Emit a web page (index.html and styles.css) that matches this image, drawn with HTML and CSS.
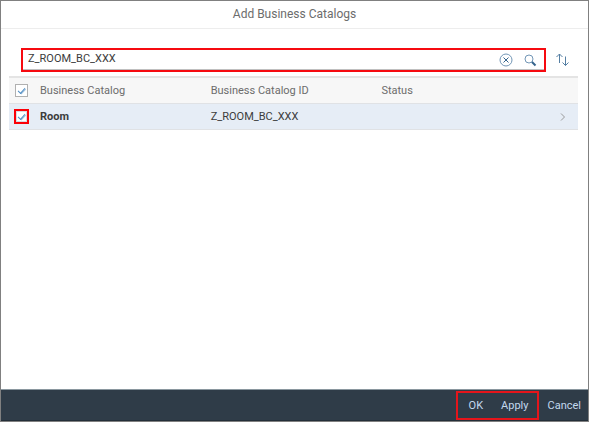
FILE: index.html
```html
<!DOCTYPE html>
<html lang="en">
<head>
<meta charset="utf-8">
<title>Add Business Catalogs</title>
<link rel="stylesheet" href="styles.css">
</head>
<body>
<main class="dialog">
  <header class="dialog-header"><h1 class="title">Add Business Catalogs</h1></header>
  <div class="content">
    <div class="toolbar">
      <form class="search marked" role="search">
        <input class="search-input" type="text" value="Z_ROOM_BC_XXX" aria-label="Search">
        <button class="icon-button" type="reset" aria-label="Clear">
          <svg width="14" height="14" viewBox="0 0 14 14"><circle cx="7" cy="7" r="6"/><path class="strong" d="M4.500 4.500l5 5M9.500 4.500l-5 5"/></svg>
        </button>
        <button class="icon-button" type="submit" aria-label="Search">
          <svg width="14" height="14" viewBox="0 0 14 14"><circle cx="6" cy="6" r="4"/><path class="handle" d="M9 9l3.500 3.500"/></svg>
        </button>
      </form>
      <button class="icon-button" type="button" aria-label="Sort">
        <svg class="sort" width="14" height="14" viewBox="0 0 14 14"><path d="M3.500 10V1M0.500 4l3-3 3 3M9.500 3.500v9M6.500 9.500l3 3 3-3"/></svg>
      </button>
    </div>
    <table class="catalogs">
      <colgroup><col class="col-select"><col class="col-text"><col class="col-text"><col><col class="col-nav"></colgroup>
      <thead>
        <tr>
          <th><label class="check"><input type="checkbox" checked aria-label="Select all"></label></th>
          <th scope="col">Business Catalog</th>
          <th scope="col">Business Catalog ID</th>
          <th scope="col">Status</th>
          <th></th>
        </tr>
      </thead>
      <tbody>
        <tr>
          <td><label class="check check-marked"><input type="checkbox" checked aria-label="Select Room"></label></td>
          <td class="name">Room</td>
          <td>Z_ROOM_BC_XXX</td>
          <td></td>
          <td><svg class="chevron" width="6" height="8" viewBox="0 0 6 8"><path d="M1 0.500L4.500 4L1 7.500"/></svg></td>
        </tr>
      </tbody>
    </table>
  </div>
  <footer class="footer">
    <div class="actions marked">
      <button class="action" type="button">OK</button>
      <button class="action" type="button">Apply</button>
    </div>
    <button class="action" type="button">Cancel</button>
  </footer>
</main>
</body>
</html>
```
FILE: styles.css
```css
* { box-sizing: border-box; }

body {
  margin: 0;
  font-family: Roboto, "Liberation Sans", sans-serif;
  font-size: 11px;
  color: #3c3c3c;
}

button, input { font: inherit; color: inherit; }
button { padding: 0; border: 0; background: none; }

.dialog {
  display: flex;
  flex-direction: column;
  min-height: 100vh;
  border: 1px solid #808080;
  background: #fff;
}

.dialog-header {
  padding: 5px 0 6px;
  border-bottom: 1px solid #ededed;
}

.title {
  margin: 0;
  font-size: 12px;
  line-height: 16px;
  font-weight: 400;
  text-align: center;
  color: #6c6c6c;
}

.content { flex: 1; padding: 19px 10px 0 8px; }

.toolbar {
  display: flex;
  align-items: center;
  gap: 10px;
  padding: 0 8px 4px 12px;
}

.marked { border: 2px solid #f60a10; }

.search {
  display: flex;
  flex: 1;
  align-items: center;
  gap: 10px;
  height: 24px;
  padding-right: 7px;
  box-shadow: inset 0 -1px #bfbfbf;
}

.search-input {
  flex: 1;
  min-width: 0;
  padding: 0 0 3px 5px;
  border: 0;
  outline: 0;
  background: none;
}

.icon-button { display: flex; }

svg {
  fill: none;
  stroke: #7296b6;
  stroke-width: 1;
}

.sort { stroke: #557fa3; }
.strong { stroke: #34638c; }
.handle { stroke: #34638c; stroke-width: 2; }

.catalogs {
  width: 100%;
  border-collapse: separate;
  border-spacing: 0;
  table-layout: fixed;
  border-top: 2px solid #e4e4e4;
}

.col-select { width: 31px; }
.col-text { width: 30%; }
.col-nav { width: 20px; }

th, td {
  height: 26px;
  padding: 0;
  border-bottom: 1px solid #e0e2e5;
  text-align: left;
  font-weight: 400;
}

th { background: #f7f7f7; color: #6c6c6c; }
td { background: #e6edf6; }
.name { font-weight: 700; }

.check {
  display: flex;
  width: 15px;
  height: 15px;
  margin-left: 5px;
  padding: 1px;
}

.check input {
  appearance: none;
  display: grid;
  place-items: center;
  width: 13px;
  height: 13px;
  margin: 0;
  border: 1px solid #b0b0b0;
  background: #fff;
}

.check input:checked::after {
  content: "";
  width: 6px;
  height: 3px;
  margin-bottom: 2px;
  border: solid #4a8ac2;
  border-width: 0 0 1px 1px;
  box-shadow: 0 1px #a4c4e0;
  transform: rotate(-48deg);
}

.check-marked { padding: 0; border: 2px solid #fb0007; }
.check-marked input { width: 11px; height: 11px; border-color: #d6dce2; }

.chevron { display: block; margin-left: 2px; stroke: #999; }

.footer {
  display: flex;
  align-items: center;
  justify-content: flex-end;
  gap: 9px;
  padding: 1px 7px 0 0;
  border-top: 1px solid #8a979f;
  border-bottom: 1px solid #232e38;
  background: #2f3c48;
  color: #c3d9ee;
}

.actions {
  display: flex;
  gap: 18px;
  padding: 0 8px 0 11px;
  border-color: #e5151b;
}

.action { height: 25px; }
```
